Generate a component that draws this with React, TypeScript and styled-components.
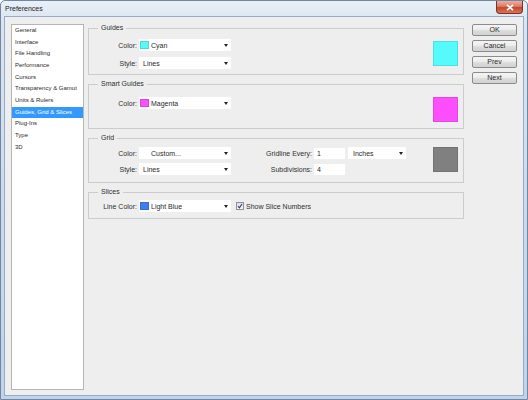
import React from 'react'
import styled, { createGlobalStyle } from 'styled-components'

const GlobalStyle = createGlobalStyle`
  html, body {
    margin: 0;
    padding: 0;
    background: #ffffff;
  }
  body {
    font-family: 'Liberation Sans', Arial, sans-serif;
  }
  * {
    box-sizing: border-box;
  }
`

const categories = [
  'General',
  'Interface',
  'File Handling',
  'Performance',
  'Cursors',
  'Transparency & Gamut',
  'Units & Rulers',
  'Guides, Grid & Slices',
  'Plug-Ins',
  'Type',
  '3D'
]
const activeCategory = 'Guides, Grid & Slices'
const buttons = ['OK', 'Cancel', 'Prev', 'Next']

const Window = styled.div`
  width: 528px;
  height: 400px;
  display: flex;
  flex-direction: column;
  border: 1px solid #7086a3;
  border-radius: 5px 5px 0 0;
  background: linear-gradient(180deg, #e9eff6 0%, #dbe5f1 5%, #ccdbed 50%, #c1d3ea 100%);
  overflow: hidden;
`

const TitleBar = styled.div`
  height: 15px;
  flex-shrink: 0;
  display: flex;
  align-items: flex-start;
  padding: 0 4px 0 4px;
`

const Title = styled.div`
  font-size: 7px;
  line-height: 15px;
  color: #222222;
`

const CloseButton = styled.div`
  margin-left: auto;
  width: 27px;
  height: 13px;
  border: 1px solid #7a3126;
  border-top: none;
  border-radius: 0 0 4px 4px;
  background: linear-gradient(180deg, #eab0a3 0%, #dc7a62 45%, #c7452c 55%, #d8765a 100%);
  display: flex;
  align-items: center;
  justify-content: center;
`

const Body = styled.div`
  flex: 1;
  min-height: 0;
  margin: 0 3px 3px;
  border: 1px solid #97abc6;
  background: #eeeeee;
  display: flex;
  align-items: flex-start;
  padding: 7px 6px 5px 6px;
`

const Sidebar = styled.div`
  align-self: stretch;
  width: 73px;
  flex-shrink: 0;
  margin-right: 4px;
  border: 1px solid #b5b5b5;
  background: #ffffff;
`

const SidebarItem = styled.div<{ $active: boolean }>`
  height: 11.67px;
  line-height: 11.67px;
  padding-left: 3px;
  font-size: 6px;
  white-space: nowrap;
  color: ${({ $active }) => ($active ? '#ffffff' : '#2a2a2a')};
  background: ${({ $active }) => ($active ? '#3399ff' : 'transparent')};
`

const Main = styled.div`
  width: 376px;
  flex-shrink: 0;
  margin-right: 8px;
  display: flex;
  flex-direction: column;
  gap: 5px;
`

const Group = styled.fieldset<{ $top: number; $bottom: number }>`
  margin: 0;
  min-width: 0;
  padding: ${({ $top }) => $top}px 5px ${({ $bottom }) => $bottom}px 0;
  border: 1px solid #cccccc;
  display: flex;
  align-items: flex-start;
`

const Legend = styled.legend`
  font-size: 7px;
  line-height: 8px;
  padding: 0 3px;
  margin-left: 9px;
  color: #2e2e2e;
`

const Fields = styled.div<{ $gap: number }>`
  display: flex;
  flex-direction: column;
  gap: ${({ $gap }) => $gap}px;
`

const Row = styled.div`
  height: 12px;
  display: flex;
  align-items: center;
`

const FieldLabel = styled.span<{ $w: number }>`
  width: ${({ $w }) => $w}px;
  flex-shrink: 0;
  margin-right: 2px;
  text-align: right;
  font-size: 7px;
  color: #2e2e2e;
  white-space: nowrap;
`

const SelectBox = styled.div<{ $w: number }>`
  width: ${({ $w }) => $w}px;
  height: 12px;
  flex-shrink: 0;
  background: #ffffff;
  display: flex;
  align-items: center;
  padding-right: 3px;
  font-size: 7px;
  color: #2a2a2a;
`

const SelectSwatch = styled.span<{ $color: string }>`
  width: 9px;
  height: 8px;
  margin: 0 2px 0 1px;
  flex-shrink: 0;
  background: ${({ $color }) => $color};
  border: 1px solid rgba(0, 0, 0, 0.12);
`

const SelectText = styled.span<{ $indent: number }>`
  flex: 1;
  padding-left: ${({ $indent }) => $indent}px;
  white-space: nowrap;
`

const Caret = styled.span`
  width: 0;
  height: 0;
  border-left: 2px solid transparent;
  border-right: 2px solid transparent;
  border-top: 3px solid #222222;
`

const TextInput = styled.div`
  width: 31px;
  height: 11px;
  flex-shrink: 0;
  margin-right: 3px;
  background: #ffffff;
  padding-left: 3px;
  font-size: 7px;
  line-height: 11px;
  color: #2a2a2a;
`

const Swatch = styled.div<{ $color: string; $offset: number }>`
  margin-left: auto;
  margin-top: ${({ $offset }) => $offset}px;
  width: 25px;
  height: 25px;
  flex-shrink: 0;
  background: ${({ $color }) => $color};
  border: 1px solid rgba(0, 0, 0, 0.1);
`

const CheckField = styled.label`
  display: flex;
  align-items: center;
  margin-left: 5px;
  font-size: 7px;
  color: #2e2e2e;
  white-space: nowrap;
`

const CheckBox = styled.span`
  width: 8px;
  height: 8px;
  margin-right: 2px;
  border: 1px solid #8e9094;
  background: linear-gradient(180deg, #dcdee2, #f6f6f6);
  display: flex;
  align-items: center;
  justify-content: center;
`

const ButtonColumn = styled.div`
  width: 45px;
  flex-shrink: 0;
  display: flex;
  flex-direction: column;
  gap: 4px;
`

const DialogButton = styled.button`
  width: 45px;
  height: 12px;
  padding: 0;
  border: 1px solid #8c8c8c;
  border-radius: 2px;
  background: linear-gradient(180deg, #f5f5f5 0%, #ebebeb 50%, #dddddd 51%, #d2d2d2 100%);
  font-family: inherit;
  font-size: 7px;
  line-height: 10px;
  color: #2a2a2a;
`

interface SelectProps {
  width: number
  text: string
  color?: string
  indent?: number
}

const Select = ({ width, text, color, indent = 0 }: SelectProps) => (
  <SelectBox $w={width}>
    {color && <SelectSwatch $color={color} />}
    <SelectText $indent={indent}>{text}</SelectText>
    <Caret />
  </SelectBox>
)

const App = () => {
  return (
    <>
      <GlobalStyle />
      <Window>
        <TitleBar>
          <Title>Preferences</Title>
          <CloseButton>
            <svg width='8' height='7' viewBox='0 0 8 7'>
              <path d='M1 0.8 L7 6.2 M7 0.8 L1 6.2' stroke='#ffffff' strokeWidth='1.6' />
            </svg>
          </CloseButton>
        </TitleBar>
        <Body>
          <Sidebar>
            {categories.map((name) => (
              <SidebarItem key={name} $active={name === activeCategory}>
                {name}
              </SidebarItem>
            ))}
          </Sidebar>
          <Main>
            <Group $top={7} $bottom={5}>
              <Legend>Guides</Legend>
              <Fields $gap={6}>
                <Row>
                  <FieldLabel $w={48}>Color:</FieldLabel>
                  <Select width={92} text='Cyan' color='#55f9f9' />
                </Row>
                <Row>
                  <FieldLabel $w={48}>Style:</FieldLabel>
                  <Select width={92} text='Lines' indent={4} />
                </Row>
              </Fields>
              <Swatch $color='#55fbfb' $offset={2} />
            </Group>
            <Group $top={9} $bottom={6}>
              <Legend>Smart Guides</Legend>
              <Fields $gap={0}>
                <Row>
                  <FieldLabel $w={48}>Color:</FieldLabel>
                  <Select width={92} text='Magenta' color='#fb4ffb' />
                </Row>
              </Fields>
              <Swatch $color='#fd4efd' $offset={0} />
            </Group>
            <Group $top={5} $bottom={7}>
              <Legend>Grid</Legend>
              <Fields $gap={4}>
                <Row>
                  <FieldLabel $w={48}>Color:</FieldLabel>
                  <Select width={92} text='Custom...' indent={12} />
                  <FieldLabel $w={81}>Gridline Every:</FieldLabel>
                  <TextInput>1</TextInput>
                  <Select width={58} text='Inches' indent={5} />
                </Row>
                <Row>
                  <FieldLabel $w={48}>Style:</FieldLabel>
                  <Select width={92} text='Lines' indent={4} />
                  <FieldLabel $w={81}>Subdivisions:</FieldLabel>
                  <TextInput>4</TextInput>
                </Row>
              </Fields>
              <Swatch $color='#808080' $offset={0} />
            </Group>
            <Group $top={4} $bottom={6}>
              <Legend>Slices</Legend>
              <Fields $gap={0}>
                <Row>
                  <FieldLabel $w={48}>Line Color:</FieldLabel>
                  <Select width={92} text='Light Blue' color='#3d7ff0' />
                  <CheckField>
                    <CheckBox>
                      <svg width='6' height='6' viewBox='0 0 6 6'>
                        <path d='M1 3.2 L2.4 4.8 L5 1' fill='none' stroke='#2b3f73' strokeWidth='1.1' />
                      </svg>
                    </CheckBox>
                    Show Slice Numbers
                  </CheckField>
                </Row>
              </Fields>
            </Group>
          </Main>
          <ButtonColumn>
            {buttons.map((label) => (
              <DialogButton key={label}>{label}</DialogButton>
            ))}
          </ButtonColumn>
        </Body>
      </Window>
    </>
  )
}

export default App
